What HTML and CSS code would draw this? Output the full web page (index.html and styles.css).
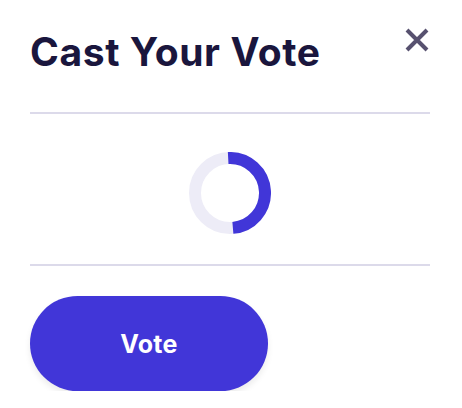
FILE: index.html
```html
<!DOCTYPE html>
<html>
<head>
<meta charset="utf-8">
<link rel="stylesheet" href="styles.css">
</head>
<body>
<div class="modal">
  <div class="header">
    <h1 class="title">Cast Your Vote</h1>
    <button class="close" aria-label="Close">
      <svg width="24" height="24" viewBox="0 0 24 24"><path d="M2 2 L22 22 M22 2 L2 22" stroke="#57516f" stroke-width="4" stroke-linecap="butt" fill="none"/></svg>
    </button>
  </div>
  <div class="body">
    <svg class="spinner" width="82" height="82" viewBox="0 0 82 82">
      <circle cx="41" cy="41" r="35" fill="none" stroke="#edecf7" stroke-width="12"/>
      <circle cx="41" cy="41" r="35" fill="none" stroke="#4136d8" stroke-width="12" stroke-dasharray="108.7 300" transform="rotate(-93 41 41)"/>
    </svg>
  </div>
  <div class="footer">
    <button class="vote">Vote</button>
  </div>
</div>
</body>
</html>
```
FILE: styles.css
```css
html, body {
  margin: 0;
  padding: 0;
  background: #ffffff;
}
body {
  font-family: Inter, "Noto Sans", sans-serif;
}
.modal {
  padding: 0 32px 0 30px;
  width: 400px;
}
.header {
  display: flex;
  justify-content: space-between;
  align-items: flex-start;
  height: 114px;
  border-bottom: 2px solid #dcdaea;
  box-sizing: border-box;
}
.title {
  margin: 28px 0 0 0;
  font-size: 39px;
  font-weight: 700;
  color: #1a163d;
  line-height: 47px;
  letter-spacing: 0.6px;
}
.close {
  margin: 28px 1px 0 0;
  padding: 0;
  border: 0;
  background: none;
  width: 24px;
  height: 24px;
  display: flex;
}
.body {
  height: 152px;
  display: flex;
  justify-content: center;
  align-items: center;
  border-bottom: 2px solid #dcdaea;
  box-sizing: border-box;
  padding-top: 8px;
}
.spinner {
  display: block;
}
.footer {
  padding-top: 30px;
}
.vote {
  width: 238px;
  height: 95px;
  border: 0;
  border-radius: 48px;
  background: #4136d8;
  color: #ffffff;
  font-family: Inter, "Noto Sans", sans-serif;
  font-weight: 700;
  font-size: 25px;
  letter-spacing: 0.3px;
  box-shadow: 0 4px 6px rgba(0, 0, 0, 0.08);
  padding: 0;
}
```
